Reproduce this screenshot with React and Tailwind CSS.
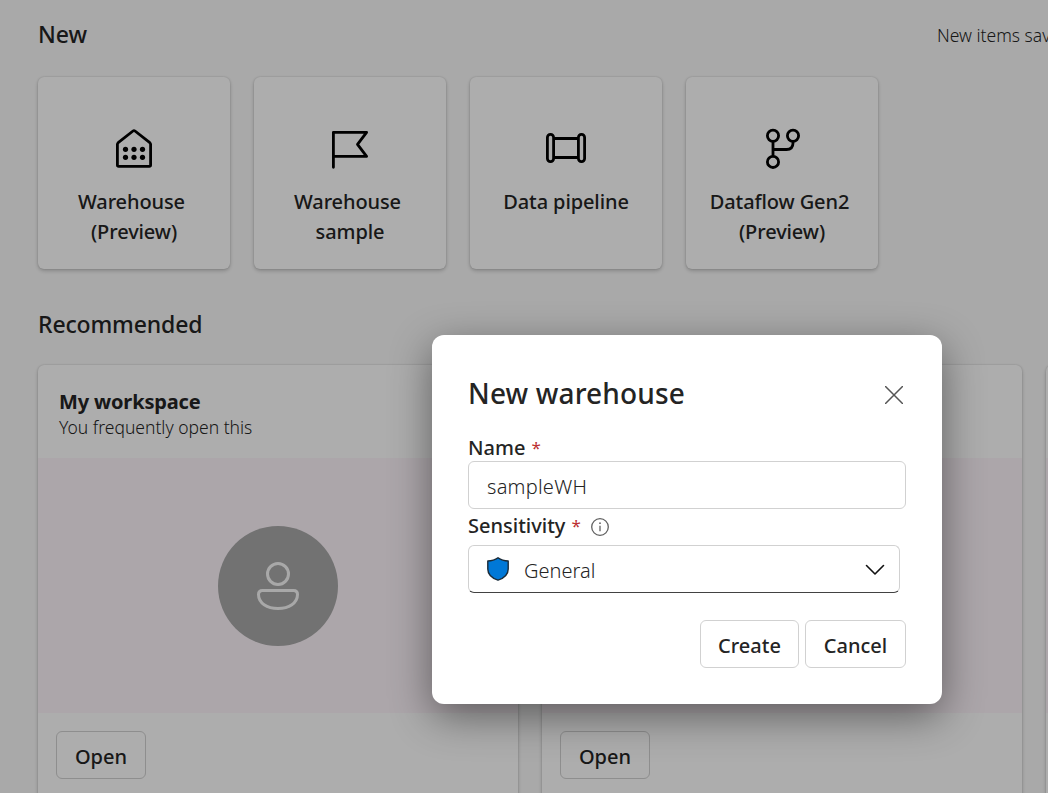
import React from "react";

function WarehouseIcon() {
  return (
    <svg width="48" height="48" viewBox="0 0 48 48" fill="none" stroke="#000" strokeWidth="2.8" strokeLinejoin="round">
      <path d="M7.4 41V20.4q0-1 .8-1.700L23 7q1-.8 2 0l14.800 11.700q.8.7.8 1.700V41q0 1.300-1.300 1.300H8.700Q7.400 42.300 7.400 41Z" />
      <g fill="#000" stroke="none">
        <circle cx="15.500" cy="25.300" r="2.600" />
        <circle cx="24" cy="25.300" r="2.600" />
        <circle cx="32.500" cy="25.300" r="2.600" />
        <circle cx="15.500" cy="33.300" r="2.600" />
        <circle cx="24" cy="33.300" r="2.600" />
        <circle cx="32.500" cy="33.300" r="2.600" />
      </g>
    </svg>
  );
}

function FlagIcon() {
  return (
    <svg width="48" height="48" viewBox="0 0 48 48" fill="none" stroke="#000" strokeWidth="2.800" strokeLinejoin="round" strokeLinecap="round">
      <path d="M7.400 43.300V8.300h33.200L31.500 20.300l9.100 12.100H7.400" />
    </svg>
  );
}

function PipelineIcon() {
  return (
    <svg width="48" height="48" viewBox="0 0 48 48" fill="none" stroke="#000" strokeWidth="2.800">
      <rect x="5.400" y="10.400" width="6.200" height="27.200" rx="3" />
      <rect x="36.400" y="10.400" width="6.200" height="27.200" rx="3" />
      <path d="M11.600 14.500h24.800M11.600 33.500h24.800" />
    </svg>
  );
}

function BranchIcon() {
  return (
    <svg width="48" height="48" viewBox="0 0 48 48" fill="none" stroke="#000" strokeWidth="2.800">
      <circle cx="15" cy="11.800" r="5.600" />
      <circle cx="35" cy="11.800" r="5.600" />
      <circle cx="15" cy="37.900" r="5.600" />
      <path d="M15 17.400v14.900M35 17.400v1.600q0 6.500-6.500 6.500H15" />
    </svg>
  );
}

function PersonIcon() {
  return (
    <svg width="60" height="60" viewBox="0 0 60 60" fill="none" stroke="#f8f8f8" strokeWidth="3">
      <circle cx="30" cy="18" r="10.500" />
      <path d="M14.500 34.500h31q4 0 4 4C49.500 47 41 52.500 30 52.500S10.500 47 10.500 38.500q0-4 4-4Z" />
    </svg>
  );
}

function NewCard({ icon, lines }) {
  return (
    <div className="flex h-48 w-48 flex-col items-center rounded-md bg-white pt-[47px] text-center text-[20px] leading-[30px] font-medium tracking-[-0.1px] shadow-[0_2px_4px_rgba(0,0,0,0.2),0_0_2px_rgba(0,0,0,0.18)]">
      <div className="mb-[15px] h-12">{icon}</div>
      {lines.map((line, i) => (
        <div key={line} className={i < lines.length - 1 ? "pr-[5px]" : ""}>
          {line}
        </div>
      ))}
    </div>
  );
}

function WorkspaceCard({ title, note, action }) {
  return (
    <div className="flex h-[480px] w-[480px] shrink-0 flex-col rounded-md bg-white shadow-[0_2px_4px_rgba(0,0,0,0.2),0_0_2px_rgba(0,0,0,0.18)]">
      <div className="h-[93px] px-[21px] pt-[22px]">
        {title && <div className="text-[20px] leading-[30px] font-bold tracking-[-0.15px]">{title}</div>}
        {note && <div className="-mt-px text-[17.500px] leading-[22px] font-light">{note}</div>}
      </div>
      <div className="flex h-[255px] items-center justify-center bg-[#fef5fb]">
        <div className="flex size-[120px] items-center justify-center rounded-full bg-[#a8a8a8]">
          <PersonIcon />
        </div>
      </div>
      {action && (
        <div className="px-[18px] pt-[18px]">
          <button className="h-12 w-[90px] rounded-md border border-[#d1d1d1] pt-1 text-[20px] font-medium">{action}</button>
        </div>
      )}
    </div>
  );
}

function Label({ children }) {
  return (
    <span className="flex text-[20px] leading-[30px] font-medium">
      {children} <span className="ml-[6px] text-[17px] font-normal text-[#bc2f32]">*</span>
    </span>
  );
}

export default function App() {
  return (
    <div className="relative h-[793px] w-full overflow-hidden bg-[#fafafa] font-['Noto_Sans',sans-serif] text-[#242424]">
      <main className="pl-[38px]">
        <header className="flex h-[77px] justify-between overflow-hidden pt-[18px]">
          <h2 className="text-[23px] leading-8 font-medium">New</h2>
          <div className="w-[111px] text-[17.500px] leading-[35px] font-light whitespace-nowrap">New items saved to</div>
        </header>
        <div className="flex gap-6">
          <NewCard icon={<WarehouseIcon />} lines={["Warehouse", "(Preview)"]} />
          <NewCard icon={<FlagIcon />} lines={["Warehouse", "sample"]} />
          <NewCard icon={<PipelineIcon />} lines={["Data pipeline"]} />
          <NewCard icon={<BranchIcon />} lines={["Dataflow Gen2", "(Preview)"]} />
        </div>
        <h2 className="mt-[39px] mb-[25px] text-[23px] leading-8 font-medium tracking-[-0.15px]">Recommended</h2>
        <div className="flex gap-6">
          <WorkspaceCard title="My workspace" note="You frequently open this" action="Open" />
          <WorkspaceCard action="Open" />
          <WorkspaceCard />
        </div>
      </main>

      <div className="absolute inset-0 bg-black/32" />

      <div className="absolute top-[335px] left-[432px] flex h-[369px] w-[510px] flex-col rounded-xl bg-white p-9 shadow-[0_12px_42px_rgba(0,0,0,0.45)]">
        <div className="flex h-[46px] items-center justify-between">
          <h1 className="pb-[2px] text-[28px] leading-10 font-medium tracking-[0.15px]">New warehouse</h1>
          <svg className="mt-[2px] mr-[3px]" width="18" height="18" viewBox="0 0 18 18" stroke="#555" strokeWidth="1.500">
            <path d="M0 0l18 18M18 0L0 18" />
          </svg>
        </div>
        <div className="mt-4 h-7">
          <Label>Name</Label>
        </div>
        <div className="flex h-12 shrink-0 items-center rounded-md border border-[#d1d1d1] px-[18px] pt-[3px] text-[20px] font-light tracking-[0.250px]">sampleWH</div>
        <div className="mt-[2px] flex h-[34px] items-start gap-[10px]">
          <Label>Sensitivity</Label>
          <svg className="mt-[7px]" width="18" height="18" viewBox="0 0 18 18" fill="none" stroke="#616161" strokeWidth="1.300">
            <circle cx="9" cy="9" r="8.300" />
            <path d="M9 7.800v5.500" />
            <circle cx="9" cy="5.200" r=".9" fill="#616161" stroke="none" />
          </svg>
        </div>
        <div className="flex h-12 w-[432px] shrink-0 items-center rounded-md border border-[#d1d1d1] border-b-[#424242] pr-[14px] pl-[18px] text-[20px] font-light">
          <svg width="22" height="24" viewBox="0 0 22 24" fill="#0078d7" stroke="#1b2b38" strokeWidth="1.400" strokeLinejoin="round">
            <path d="M11 .8C8 3 4.500 4 .8 4v8c0 5.500 4.200 9.200 10.200 11.200 6-2 10.200-5.700 10.200-11.200V4C17.500 4 14 3 11 .8Z" />
          </svg>
          <span className="ml-[15px] flex-1 pt-1">General</span>
          <svg className="mt-[2px]" width="20" height="12" viewBox="0 0 20 12" fill="none" stroke="#111" strokeWidth="1.600" strokeLinecap="round" strokeLinejoin="round">
            <path d="M1.500 1.500l8.500 8.500 8.500-8.500" />
          </svg>
        </div>
        <div className="mt-[27px] flex justify-end gap-[6px] text-[20px] font-medium">
          <button className="h-12 w-[99px] rounded-md border border-[#d1d1d1] pt-1">Create</button>
          <button className="h-12 w-[101px] rounded-md border border-[#d1d1d1] pt-1">Cancel</button>
        </div>
      </div>
    </div>
  );
}
